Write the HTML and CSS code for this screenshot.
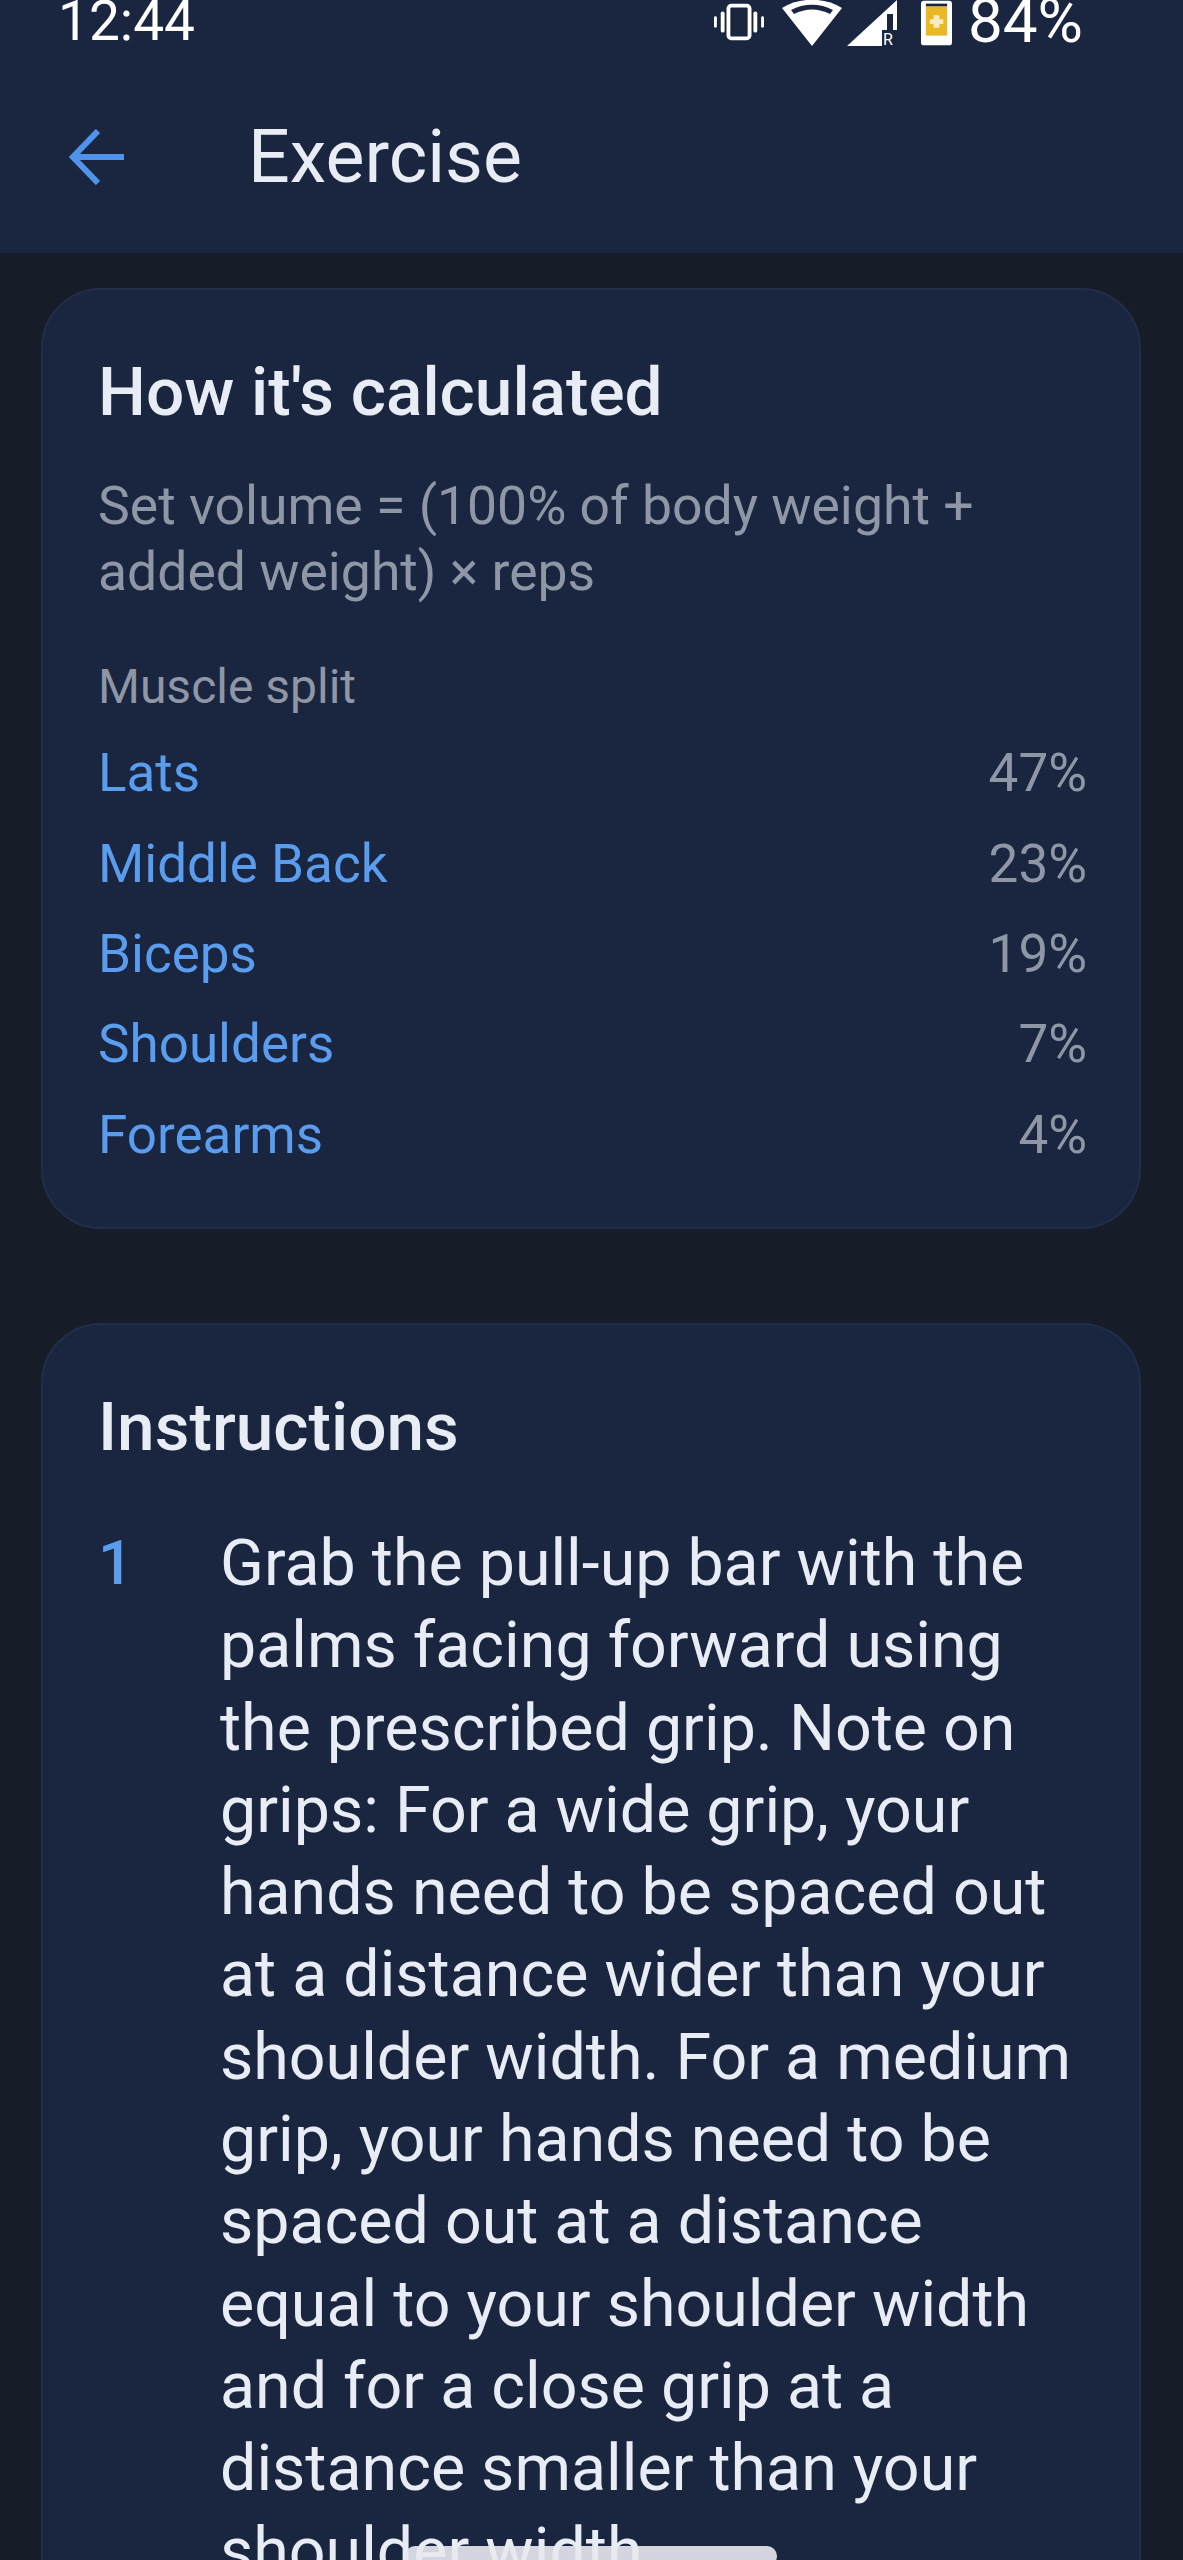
FILE: index.html
```html
<!DOCTYPE html>
<html lang="en">
<head>
<meta charset="utf-8">
<title>Exercise</title>
<link rel="stylesheet" href="styles.css">
</head>
<body>
<div class="screen">
  <header class="appbar">
    <div class="status">
      <span class="time">12:44</span>
      <div class="status-icons">
        <svg class="ic-vib" viewBox="0 0 52 38"><rect x="15" y="2" width="22" height="34" rx="3" fill="none" stroke="#fff" stroke-width="4"/><rect x="7" y="8" width="4" height="22" rx="2" fill="#fff"/><rect x="41" y="8" width="4" height="22" rx="2" fill="#fff"/><rect x="0" y="13" width="3" height="12" rx="1.5" fill="#fff"/><rect x="49" y="13" width="3" height="12" rx="1.5" fill="#fff"/></svg>
        <svg class="ic-wifi" viewBox="0 0 60 46"><path d="M0 8C17-3 43-3 60 8L30 46Z" fill="#fff"/><path d="M9 10C22 3 38 3 51 10L48 14C36 8 24 8 12 14Z" fill="#1a2640"/></svg>
        <svg class="ic-signal" viewBox="0 0 50 46"><path d="M50 0V46H0Z" fill="#fff"/><path d="M40 14H46V30H40Z" fill="#1a2640"/><rect x="35" y="30" width="15" height="16" fill="#1a2640"/><text x="36" y="45" class="roam">R</text></svg>
        <svg class="ic-batt" viewBox="0 0 32 46"><rect width="32" height="46" rx="3" fill="#fff"/><rect x="5" y="3" width="22" height="3" fill="#1a2640"/><rect x="5" y="6" width="22" height="30" fill="#e9b824"/><path d="M13 15h6v4h4v5h-4v4h-6v-4H9v-5h4Z" fill="#f6ecc4"/></svg>
        <span class="pct">84%</span>
      </div>
    </div>
    <div class="toolbar">
      <svg class="back" viewBox="0 0 55 56"><path d="M29 2L4 28L29 54M4 28H55" fill="none" stroke="#4f94ea" stroke-width="6"/></svg>
      <h1 class="page-title">Exercise</h1>
    </div>
  </header>
  <main class="content">
    <section class="card calc">
      <h2 class="card-title">How it's calculated</h2>
      <p class="formula">Set volume = (100% of body weight +<br>added weight) × reps</p>
      <p class="split-label">Muscle split</p>
      <ul class="split">
        <li class="split-row"><span class="muscle">Lats</span><span class="share">47%</span></li>
        <li class="split-row"><span class="muscle">Middle Back</span><span class="share">23%</span></li>
        <li class="split-row"><span class="muscle">Biceps</span><span class="share">19%</span></li>
        <li class="split-row"><span class="muscle">Shoulders</span><span class="share">7%</span></li>
        <li class="split-row"><span class="muscle">Forearms</span><span class="share">4%</span></li>
      </ul>
    </section>
    <section class="card instr">
      <h2 class="card-title">Instructions</h2>
      <div class="step">
        <span class="step-num">1</span>
        <p class="step-text">Grab the pull-up bar with the<br>palms facing forward using<br>the prescribed grip. Note on<br>grips: For a wide grip, your<br>hands need to be spaced out<br>at a distance wider than your<br>shoulder width. For a medium<br>grip, your hands need to be<br>spaced out at a distance<br>equal to your shoulder width<br>and for a close grip at a<br>distance smaller than your<br>shoulder width.</p>
      </div>
    </section>
  </main>
  <div class="home-bar"></div>
</div>
</body>
</html>
```
FILE: styles.css
```css
* { box-sizing: border-box; margin: 0; padding: 0; }
html, body { background: #161c28; }
.screen {
  position: relative;
  width: 1183px;
  height: 2560px;
  overflow: hidden;
  background: #161c28;
  font-family: Roboto, "Noto Sans", sans-serif;
  color: #e8ecf4;
}
.appbar { background: #1a2640; height: 253px; }
.status {
  height: 46px;
  padding: 0 100px 0 58px;
  display: flex;
  justify-content: space-between;
  align-items: flex-start;
  color: #fff;
}
.time { font-size: 55px; line-height: 42px; height: 42px; }
.status-icons { display: flex; align-items: flex-start; }
.ic-vib { width: 50px; height: 38px; margin: 3px 18px 0 0; }
.ic-wifi { width: 60px; height: 46px; margin-right: 5px; }
.ic-signal { width: 50px; height: 46px; margin-right: 24px; }
.ic-batt { width: 31px; height: 46px; margin-right: 16px; }
.pct { font-size: 62px; line-height: 42px; height: 42px; }
.roam { font: 16px Roboto, sans-serif; fill: #fff; }
.toolbar { display: flex; align-items: center; padding: 83px 0 0 69px; }
.back { width: 55px; height: 56px; }
.page-title { font-size: 73.5px; font-weight: 400; line-height: 56px; margin-left: 124px; }
.content { padding: 35px 42px 0 41px; }
.card {
  background: #1a2640;
  border: 2px solid #222e49;
  border-radius: 60px;
}
.calc { height: 941px; padding: 60px 52px 0 55px; margin-bottom: 94px; }
.card-title { font-size: 67.5px; font-weight: 500; line-height: 84px; }
.formula { font-size: 53.5px; line-height: 66px; color: #8f96a6; margin-top: 39px; }
.split-label { font-size: 48px; line-height: 60px; color: #8f96a6; margin-top: 52px; }
.split { list-style: none; margin-top: 11px; }
.split-row { display: flex; justify-content: space-between; height: 90.4px; align-items: center; font-size: 53px; }
.muscle { color: #5a9cee; }
.share { color: #8f96a6; }
.instr { height: 1400px; padding: 60px 54px 0 55px; }
.step { display: flex; margin-top: 53px; }
.step-num { width: 122px; flex: none; font-size: 62px; line-height: 82px; font-weight: 500; color: #5a9cee; }
.step-text { font-size: 64.5px; line-height: 82.3px; white-space: nowrap; }
.home-bar {
  position: absolute;
  left: 405px;
  top: 2546px;
  width: 372px;
  height: 20px;
  border-radius: 10px;
  background: #e8eaf0;
  opacity: 0.9;
}
```
